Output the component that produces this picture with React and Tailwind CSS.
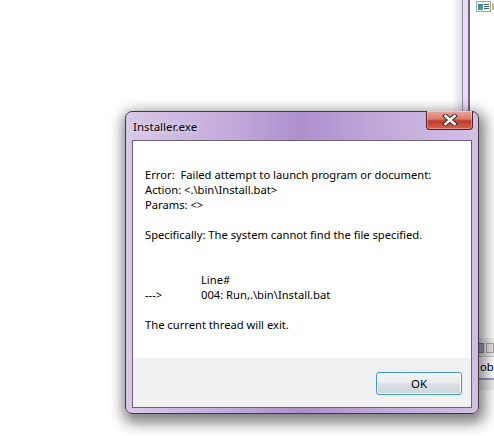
import React from 'react';

const font = { fontFamily: '"Noto Sans", "Open Sans", sans-serif' };

const CloseGlyph = () => (
  <svg width="16" height="12" viewBox="0 0 16 12">
    <path d="M3.5 2 L12.5 10 M12.5 2 L3.5 10" stroke="#3b2a2a" strokeWidth="4.6" strokeLinecap="square" />
    <path d="M3.5 2 L12.5 10 M12.5 2 L3.5 10" stroke="#ffffff" strokeWidth="2.6" strokeLinecap="square" />
  </svg>
);

const BackgroundWindow = () => (
  <>
    {/* shadow + frame of the window behind */}
    <div className="absolute left-[452px] top-0 w-[10px] h-[120px] bg-[linear-gradient(to_right,rgba(255,255,255,0),rgba(0,0,0,0.12))]" />
    <div className="absolute left-[462px] top-0 w-[6px] h-[120px] bg-[#e9dbf6] border-l border-[#9a8aa8]" />
    <div className="absolute left-[468px] top-0 w-[2px] h-[120px] bg-[#6f6878]" />
    <div className="absolute left-[470px] top-0 w-[24px] h-[120px] bg-white" />
    <div className="absolute left-[476px] top-[1px] w-[15px] h-[11px] border border-[#9aa6b2] bg-[#f4f6f8] flex items-center gap-[1px] px-[1px]">
      <div className="w-[5px] h-[6px] bg-[linear-gradient(135deg,#2c7fae,#4fb38a)]" />
      <div className="flex flex-col gap-[1px]">
        <div className="w-[5px] h-[1px] bg-[#4b5a6a]" />
        <div className="w-[5px] h-[1px] bg-[#4b5a6a]" />
        <div className="w-[5px] h-[1px] bg-[#4b5a6a]" />
      </div>
    </div>
    <div className="absolute left-[492px] top-[3px] w-[2px] h-[7px] bg-[#e8c040]" />

    {/* bits of another window at lower right */}
    <div className="absolute left-[478px] top-[338px] w-[16px] h-[52px] bg-[#eeeeee]">
      <div className="flex gap-[2px] pt-[5px]">
        <div className="w-[6px] h-[10px] border border-[#7e8a96] bg-[#9fb4c4]" />
        <div className="w-[8px] h-[10px] border border-[#a8a8a8] bg-[#e4e4e4]" />
      </div>
      <div className="mt-[3px] h-[22px] border-t border-[#c8c8c8] bg-white pl-[2px] text-[11.2px] leading-[20px] text-black" style={font}>ob</div>
      <div className="h-[2px] bg-[#a79acb]" />
    </div>
  </>
);

const Dialog = () => (
  <div className="absolute left-[125px] top-[111px] w-[354px] h-[303px] rounded-[7px] border border-[#3d3845] shadow-[2px_5px_14px_4px_rgba(0,0,0,0.5)] bg-[linear-gradient(to_right,#d8c9e7_0%,#c2a9db_30%,#ae8fcc_50%,#c1a8da_72%,#d2c0e4_100%)] flex flex-col px-[6px] pb-[5px]" style={font}>
    {/* title bar */}
    <div className="relative h-[28px] flex items-center pl-[1px]">
      <span className="text-[11.5px] text-black leading-none pt-[2px] [text-shadow:0_0_6px_rgba(255,255,255,0.9)]">Installer.exe</span>
      <div className="absolute right-[-1px] top-[-1px] w-[47px] h-[19px] rounded-b-[4px] border border-[#4a2222] border-t-0 bg-[linear-gradient(to_bottom,#e9a89c_0%,#d77a6c_45%,#c03a2b_55%,#d4604f_100%)] flex items-center justify-center shadow-[inset_0_0_0_1px_rgba(255,255,255,0.35)]">
        <CloseGlyph />
      </div>
    </div>

    {/* client area */}
    <div className="flex-1 flex flex-col border border-[#6b6275] bg-white">
      <div className="flex-1 pt-[26px] pl-[12px] text-[11.2px] leading-[15px] text-black whitespace-pre">
        <div>Error:  Failed attempt to launch program or document:</div>
        <div>Action: &lt;.\bin\Install.bat&gt;</div>
        <div>Params: &lt;&gt;</div>
        <div>&nbsp;</div>
        <div>Specifically: The system cannot find the file specified.</div>
        <div>&nbsp;</div>
        <div>&nbsp;</div>
        <div className="flex">
          <span className="w-[56px]"></span>
          <span>Line#</span>
        </div>
        <div className="flex">
          <span className="w-[56px]">---&gt;</span>
          <span>004: Run,.\bin\Install.bat</span>
        </div>
        <div>&nbsp;</div>
        <div>The current thread will exit.</div>
      </div>
      <div className="h-[49px] bg-[#f0f0f0] flex justify-end items-start pt-[14px] pr-[9px]">
        <button className="w-[86px] h-[23px] rounded-[3px] border border-[#3c9ad8] bg-[linear-gradient(to_bottom,#f2f4f5_0%,#eaeced_45%,#d9dee2_55%,#d0d7dc_100%)] shadow-[inset_0_0_0_1px_rgba(255,255,255,0.8)] text-[11.5px] text-black leading-none">
          OK
        </button>
      </div>
    </div>
  </div>
);

export default function App() {
  return (
    <div className="relative w-[494px] h-[436px] bg-white overflow-hidden">
      <BackgroundWindow />
      <Dialog />
    </div>
  );
}
